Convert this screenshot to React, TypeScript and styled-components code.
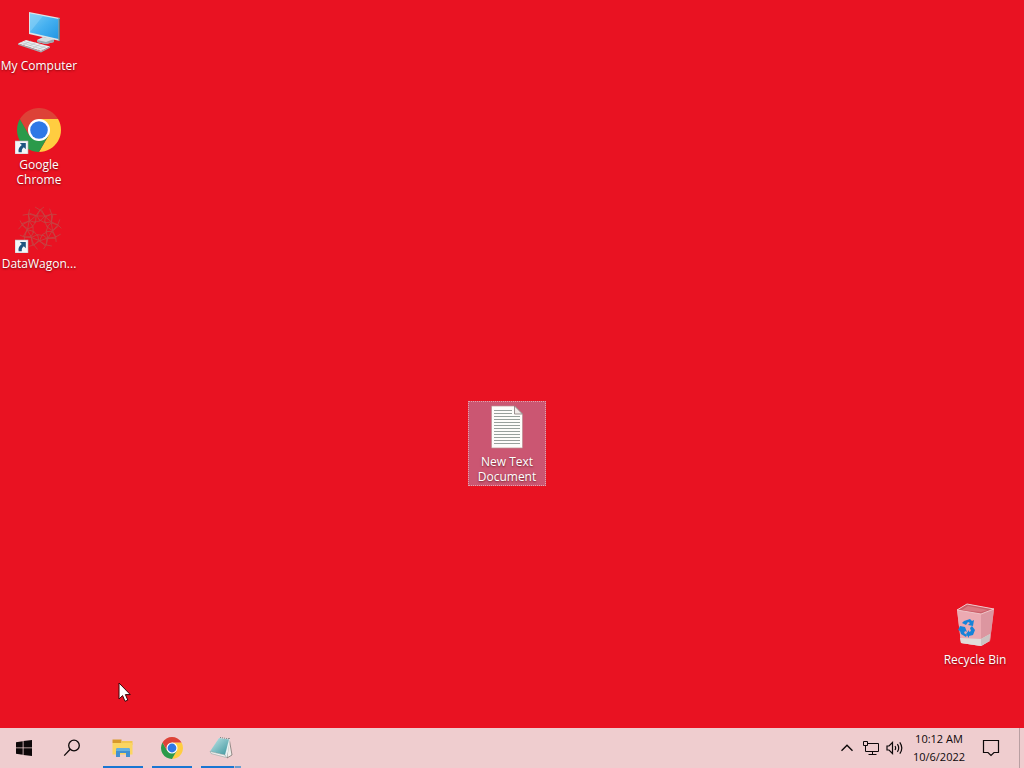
import React from "react";
import styled, { createGlobalStyle } from "styled-components";

const GlobalStyle = createGlobalStyle`
  * { box-sizing: border-box; }
  html, body { margin: 0; height: 100%; }
  #root { height: 100%; }
  body, button {
    font-family: "Open Sans", "Noto Sans", sans-serif;
    font-size: 12px;
  }
`;

const Screen = styled.div`
  display: flex;
  flex-direction: column;
  min-height: 100%;
  background: #e91222;
  cursor: default;
`;

const Desktop = styled.main`
  flex: 1;
  display: grid;
  grid-template-columns: repeat(auto-fill, 78px);
  grid-auto-rows: 99px;
  align-items: start;
  padding-top: 5px;
`;

const Shortcut = styled.button<{ $col: number; $row: number; $selected?: boolean }>`
  grid-column: ${(p) => p.$col};
  grid-row: ${(p) => p.$row};
  display: flex;
  flex-direction: column;
  align-items: center;
  gap: 3px;
  padding: 2px 0;
  border: 0;
  color: #fff;
  background: ${(p) => (p.$selected ? "#cb5672" : "transparent")};
  outline: ${(p) => (p.$selected ? "1px dotted #e5a3ac" : "none")};
  outline-offset: -1px;
`;

const ShortcutIcon = styled.span`
  display: block;
  height: 48px;
  svg { display: block; }
`;

const ShortcutLabel = styled.span`
  line-height: 15px;
  text-align: center;
  white-space: pre-line;
  text-shadow: 0 1px 2px rgba(60, 0, 0, 0.6);
`;

const Taskbar = styled.footer`
  display: flex;
  justify-content: space-between;
  height: 40px;
  background: #efcdcf;
`;

const Group = styled.div`
  display: flex;
`;

const Tasks = styled.div`
  display: flex;
  gap: 9px;
  padding-left: 7px;
`;

const BarButton = styled.button<{ $width: number }>`
  display: flex;
  align-items: center;
  justify-content: center;
  width: ${(p) => p.$width}px;
  height: 40px;
  padding: 0;
  border: 0;
  color: #0d0809;
  background: transparent;
`;

const TaskButton = styled(BarButton)<{ $stacked?: boolean }>`
  border-bottom: 2px solid #1a76d2;
  padding-top: 2px;
  ${(p) =>
    p.$stacked &&
    `border-image: linear-gradient(to right, #1a76d2 32px, #d3b9c5 32px, #d3b9c5 33px, #6a9dd0 33px) 2;
     border-width: 0 0 2px;`}
`;

const Clock = styled(BarButton)`
  flex-direction: column;
  font-size: 11px;
  line-height: 18px;
`;

const ShowDesktop = styled.button`
  width: 5px;
  margin-left: 8px;
  padding: 0;
  border: 0;
  border-left: 1px solid #b99fa2;
  background: transparent;
`;

const Pointer = styled.svg`
  position: absolute;
  left: 118px;
  top: 682px;
  pointer-events: none;
`;

const ShortcutArrow = () => (
  <g>
    <rect x="0" y="35" width="13" height="13" fill="#f4f6f8" stroke="#b8aeb4" strokeWidth=".6" />
    <path d="M4.800 37h6v6.200l-2-2c-1.600 1.200-2.200 2.600-2 5H3.600c-.6-3.200.8-5.400 3.200-7.200z" fill="#1f5580" />
  </g>
);

const ChromeMark = () => (
  <>
    <path d="M24 13H43.050A22 22 0 0 1 24 46L33.530 29.500z" fill="#ffcd40" />
    <path d="M14.470 29.500 4.950 13A22 22 0 0 0 24 46L33.530 29.500z" fill="#2b9a4a" />
    <path d="M24 13H43.050A22 22 0 0 0 4.950 13L14.470 29.500z" fill="#dd4237" />
    <circle cx="24" cy="24" r="11" fill="#fff" />
    <circle cx="24" cy="24" r="8.800" fill="#2f78e6" />
  </>
);

const ComputerIcon = () => (
  <svg width="48" height="48" viewBox="0 0 48 48">
    <defs>
      <linearGradient id="screen" x1="0" y1="0" x2="1" y2="1">
        <stop offset="0" stopColor="#7dccf5" />
        <stop offset=".5" stopColor="#45b0f0" />
        <stop offset="1" stopColor="#2196e3" />
      </linearGradient>
    </defs>
    <path d="m22 33 6-3 11 2v3l-8 2-9-2z" fill="#d5dde2" />
    <path d="m22 33 9 2 8-3v3l-8 2-9-2z" fill="#9aa6ad" />
    <path d="M14 5 45 11V34L14 27z" fill="#dde4e8" />
    <path d="M15 6.500 43.500 12V32L15 25.500z" fill="url(#screen)" />
    <path d="m15 6.500 13 2.600L15 25z" fill="#8ed4f7" opacity=".5" />
    <path d="m43.500 11 1.500.4V34l-1.500-.6z" fill="#66737b" />
    <path d="M3 36.500 11 33 35 39.500 26 44z" fill="#eceff1" />
    <path d="m3 36.500 23 7.500 9-4.500v1.300L26 45.500 3 37.800z" fill="#a3acb2" />
    <path d="m6 35.500 22 7M9 34.500l22 6.500M8 38l8-4m-3 5.500 8-4m-3 5.500 8-4m-3 5.500 8-4" stroke="#b4bcc1" strokeWidth=".6" fill="none" />
  </svg>
);

const ChromeIcon = () => (
  <svg width="48" height="48" viewBox="0 0 48 48">
    <ChromeMark />
    <ShortcutArrow />
  </svg>
);

const LATTICE = Array.from({ length: 9 }, (_, i) => i * 40);

const DataWagonIcon = () => (
  <svg width="48" height="48" viewBox="0 0 48 48">
    <g fill="none" stroke="#b8564f" strokeWidth=".8" opacity=".75">
      {LATTICE.map((angle) => (
        <g key={angle} transform={`rotate(${angle} 25 23)`}>
          <path d="M25 5 20 2M25 5l4-3M25 5l-3 6-8-3M25 5l5 6 7-2" />
          <path d="m22 11 8 0-5 5zM25 16l-6 1" />
        </g>
      ))}
    </g>
    <ShortcutArrow />
  </svg>
);

const DocumentIcon = () => (
  <svg width="48" height="48" viewBox="0 0 48 48">
    <path d="M8.500 3H31.500L39.500 11V45H8.500z" fill="#fdfcfa" stroke="#b98d91" strokeWidth=".7" />
    <path d="M31.500 3v8h8z" fill="#f1ebe9" stroke="#85797a" strokeWidth=".8" />
    <path d="M11 7.500H29M11 10.500H29M11 13.500H37M11 16.500H37M11 19.500H37M11 22.500H37M11 25.500H37M11 28.500H37M11 31.500H37M11 34.500H37M11 37.500H37M11 40.500H37" stroke="#98a09c" />
  </svg>
);

const BinIcon = () => (
  <svg width="48" height="48" viewBox="0 0 48 48">
    <path d="m6 9 10-6 27 5-4 32-9 5-20-3z" fill="#e99ba4" />
    <path d="M6 9 30 13 30 45 10 42z" fill="#ecaab2" />
    <path d="m30 13 13-5-4 32-9 5z" fill="#dc96a0" />
    <path d="m9 37 21 1 9-5-1 7-8 5-20-3z" fill="#e1dcda" />
    <path d="m30 38 9-5-1 7-8 5z" fill="#cbc3c2" />
    <path d="m6 9 10-6 27 5-13 5z" fill="#cb5f69" stroke="#f0c6c9" strokeWidth="1" />
    <path d="m11 9 6-4 20 4-7 2z" fill="#db7881" />
    <g fill="#1683d9">
      <path d="m13 20 6-2 2 2 2-1-1 6-5-1 2-2-2-1-2 3-4-2z" />
      <path d="m9 25 5 1 2 5-2-1-1 2 3 2-1 2-5-3-1-3-2-1z" />
      <path d="m21 25 3 4-2 5-4 1v2l-3-4 3-4v2l2-1-1-3z" />
    </g>
  </svg>
);

const StartIcon = () => (
  <svg width="16" height="16" viewBox="0 0 16 16" fill="currentColor">
    <path d="M0 2.200 6.700 1.200V7.500H0zM7.500 1.100 16 0V7.500H7.500zM0 8.300H6.700V14.800L0 13.800zM7.500 8.300H16V16L7.500 14.900z" />
  </svg>
);

const SearchIcon = () => (
  <svg width="18" height="18" viewBox="0 0 18 18" fill="none" stroke="currentColor" strokeWidth="1.300">
    <circle cx="11" cy="6.500" r="5.300" />
    <path d="M7.200 10.300 1.200 16.600" />
  </svg>
);

const ExplorerIcon = () => (
  <svg width="24" height="24" viewBox="0 0 24 24">
    <path d="M1.500 3.500H10.500V7H1.500z" fill="#d89a2b" />
    <path d="M10.500 5H21.500V9H10.500z" fill="#f3c64f" />
    <path d="M1.500 7H21.500V18.500H1.500z" fill="#fbd561" />
    <path d="M5 21V14Q5 12 7 12H17Q19 12 19 14V21H15V17H9V21z" fill="#4290cf" />
    <path d="M5 14Q5 12 7 12H17Q19 12 19 14V15H5z" fill="#67b0dd" />
  </svg>
);

const NotepadIcon = () => (
  <svg width="26" height="24" viewBox="0 0 26 24">
    <defs>
      <linearGradient id="pad" x1="0" y1="0" x2="1" y2="1">
        <stop offset="0" stopColor="#c4e8ea" />
        <stop offset="1" stopColor="#3a949c" />
      </linearGradient>
    </defs>
    <path d="m21 2 3 17-5 3z" fill="#efeeea" stroke="#6b6562" strokeWidth=".7" />
    <path d="m11 2 11 1-3 18.500L2 17z" fill="#e8f2f2" />
    <path d="m11 2 10 1.500-4 15.500L2 15.500z" fill="url(#pad)" />
    <path d="m2 15.500 15 3.500 1.500 2.500L3 17.500z" fill="#f4f4f1" stroke="#829395" strokeWidth=".5" />
    <path d="m12 1.500 10 1.500" stroke="#7c8384" strokeWidth="1" strokeDasharray="1 1" />
  </svg>
);

const ChevronIcon = () => (
  <svg width="14" height="8" viewBox="0 0 14 8" fill="none" stroke="currentColor" strokeWidth="1.400">
    <path d="m1.500 6.800 5.500-5.500 5.500 5.500" />
  </svg>
);

const NetworkIcon = () => (
  <svg width="16" height="14" viewBox="0 0 16 14" fill="none" stroke="currentColor">
    <path d="M5 2.500H15.500V10.500H2.500M9.500 10.500V13.500M5.500 13.500H13.500M.5.500H4.500V4.500H.5zM2.500 4.500V10.500" />
  </svg>
);

const VolumeIcon = () => (
  <svg width="18" height="14" viewBox="0 0 18 14" fill="none" stroke="currentColor" strokeWidth="1.200">
    <path d="M1 5H3L6.500 1.500V12.500L3 9H1z" />
    <path d="M9 5Q10.300 7 9 9M11.400 3.200Q14 7 11.400 10.800M13.800 1.300Q17.800 7 13.800 12.700" />
  </svg>
);

const NotificationIcon = () => (
  <svg width="18" height="18" viewBox="0 0 18 18" fill="none" stroke="currentColor" strokeWidth="1.200">
    <path d="M1.500 1.500H16.500V13.500H12L9 16.500 6 13.500H1.500z" />
  </svg>
);

const shortcuts = [
  { label: "My Computer", col: 1, row: 1, Icon: ComputerIcon },
  { label: "Google\nChrome", col: 1, row: 2, Icon: ChromeIcon },
  { label: "DataWagon...", col: 1, row: 3, Icon: DataWagonIcon },
  { label: "New Text\nDocument", col: 7, row: 5, Icon: DocumentIcon, selected: true },
  { label: "Recycle Bin", col: 13, row: 7, Icon: BinIcon },
];

export default function App() {
  return (
    <Screen>
      <GlobalStyle />
      <Desktop>
        {shortcuts.map(({ label, col, row, Icon, selected }) => (
          <Shortcut key={label} $col={col} $row={row} $selected={selected}>
            <ShortcutIcon><Icon /></ShortcutIcon>
            <ShortcutLabel>{label}</ShortcutLabel>
          </Shortcut>
        ))}
      </Desktop>
      <Taskbar>
        <Group>
          <BarButton $width={48} aria-label="Start"><StartIcon /></BarButton>
          <BarButton $width={48} aria-label="Search"><SearchIcon /></BarButton>
          <Tasks>
            <TaskButton $width={40} aria-label="File Explorer"><ExplorerIcon /></TaskButton>
            <TaskButton $width={40} aria-label="Google Chrome">
              <svg width="24" height="24" viewBox="0 0 48 48"><ChromeMark /></svg>
            </TaskButton>
            <TaskButton $width={40} $stacked aria-label="Notepad"><NotepadIcon /></TaskButton>
          </Tasks>
        </Group>
        <Group>
          <BarButton $width={24} aria-label="Show hidden icons"><ChevronIcon /></BarButton>
          <BarButton $width={24} aria-label="Network"><NetworkIcon /></BarButton>
          <BarButton $width={24} aria-label="Volume"><VolumeIcon /></BarButton>
          <Clock $width={64}>
            <span>10:12 AM</span>
            <span>10/6/2022</span>
          </Clock>
          <BarButton $width={40} aria-label="Notifications"><NotificationIcon /></BarButton>
          <ShowDesktop aria-label="Show desktop" />
        </Group>
      </Taskbar>
      <Pointer width="14" height="21" viewBox="0 0 14 21" aria-hidden="true">
        <path d="M1 1V17L4.600 13.600 7 19.300 9.800 18.100 7.400 12.600H12.300z" fill="#fff" stroke="#3a0508" />
      </Pointer>
    </Screen>
  );
}
